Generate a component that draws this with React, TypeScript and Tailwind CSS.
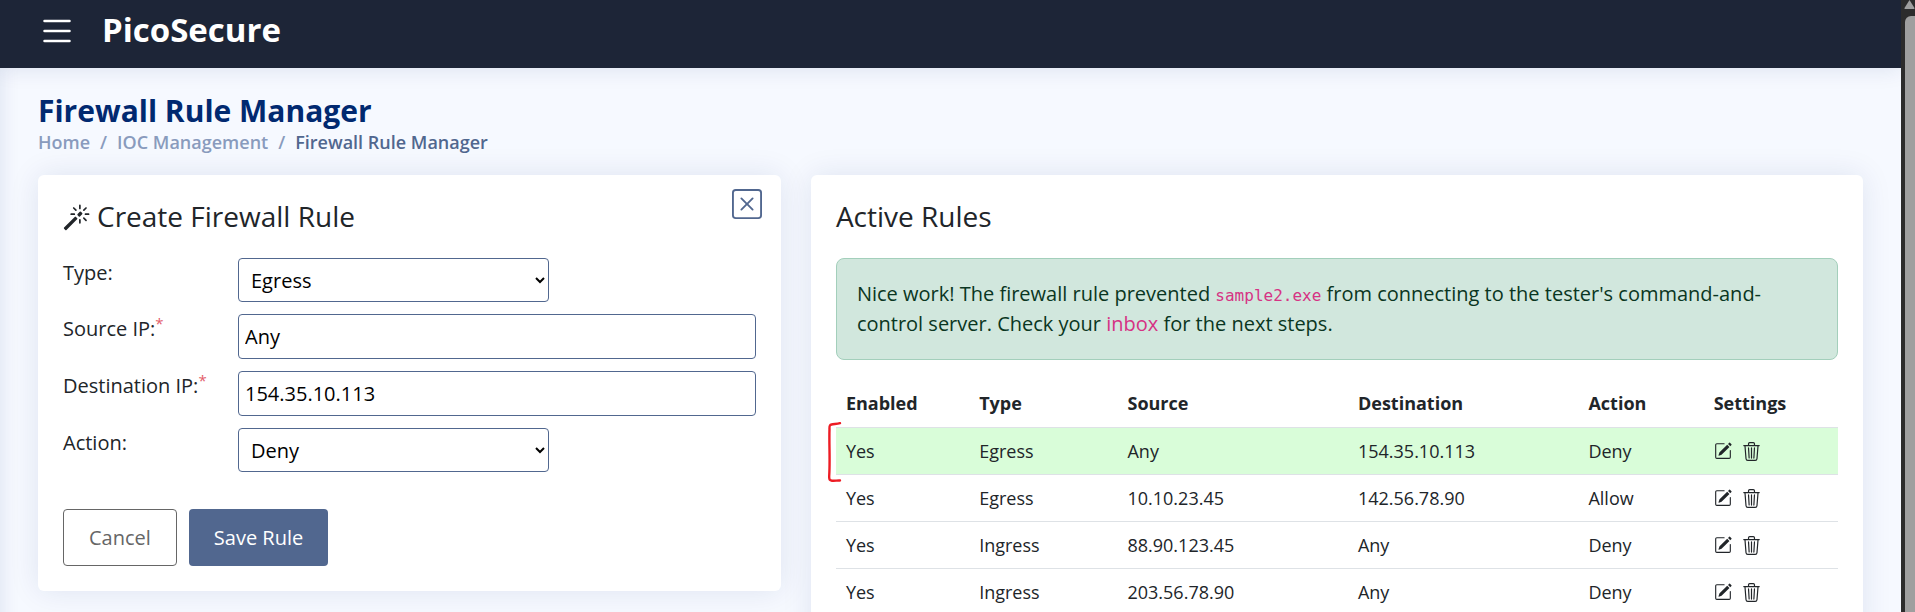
import { BsList, BsMagic, BsPencilSquare, BsTrash3, BsXSquare } from "react-icons/bs";

interface Rule {
  enabled: string;
  type: string;
  source: string;
  destination: string;
  action: string;
  highlighted?: boolean;
}

const rules: Rule[] = [
  { enabled: "Yes", type: "Egress", source: "Any", destination: "154.35.10.113", action: "Deny", highlighted: true },
  { enabled: "Yes", type: "Egress", source: "10.10.23.45", destination: "142.56.78.90", action: "Allow" },
  { enabled: "Yes", type: "Ingress", source: "88.90.123.45", destination: "Any", action: "Deny" },
  { enabled: "Yes", type: "Ingress", source: "203.56.78.90", destination: "Any", action: "Deny" },
];

const cardClass = "relative rounded-md bg-white p-[25px] shadow-[0_0_30px_rgba(1,41,112,0.1)]";
const cardTitleClass = "flex h-[58px] items-start text-[28px] leading-8 text-[#212529]";
const rowClass = "grid grid-cols-[175px_1fr]";
const labelClass = "text-xl leading-[30px] text-[#212529]";
const selectClass =
  "h-11 w-3/5 rounded border border-[#51678f] bg-white pl-2 text-xl text-black";
const inputClass =
  "h-[45px] w-full rounded border border-[#51678f] bg-white px-1.5 text-xl text-black";

function Header() {
  return (
    <header className="relative flex h-[68px] shrink-0 items-start gap-[25px] bg-[#1d2537] pl-[37px] pt-[11px] text-white shadow-[0_2px_20px_rgba(1,41,112,0.1)]">
      <button type="button" aria-label="Toggle navigation">
        <BsList size={40} />
      </button>
      <a href="#home" className="text-[33px] leading-[38px] font-bold">
        PicoSecure
      </a>
    </header>
  );
}

function Breadcrumb() {
  return (
    <nav aria-label="Breadcrumb">
      <ol className="flex gap-2.5 text-lg leading-6 font-semibold text-[#899bbd]">
        <li>
          <a href="#home">Home</a>
        </li>
        <li aria-hidden="true">/</li>
        <li>
          <a href="#ioc">IOC Management</a>
        </li>
        <li aria-hidden="true">/</li>
        <li className="text-[#51678f]" aria-current="page">
          Firewall Rule Manager
        </li>
      </ol>
    </nav>
  );
}

function RuleForm() {
  return (
    <section className={`${cardClass} col-span-5`}>
      <button type="button" aria-label="Close" className="absolute top-3.5 right-[19px] text-[#51678f]">
        <BsXSquare size={30} />
      </button>
      <h2 className={cardTitleClass}>
        <BsMagic size={27} className="mt-1 mr-[7px]" />
        Create Firewall Rule
      </h2>
      <form onSubmit={(event) => event.preventDefault()}>
        <div className="flex flex-col gap-3">
          <div className={rowClass}>
            <label htmlFor="type" className={labelClass}>
              Type:
            </label>
            <select id="type" className={selectClass} defaultValue="Egress">
              <option>Egress</option>
              <option>Ingress</option>
            </select>
          </div>
          <div className={rowClass}>
            <label htmlFor="source" className={labelClass}>
              Source IP:<sup className="text-[#e35d6a]">*</sup>
            </label>
            <input id="source" className={inputClass} defaultValue="Any" />
          </div>
          <div className={rowClass}>
            <label htmlFor="destination" className={labelClass}>
              Destination IP:<sup className="text-[#e35d6a]">*</sup>
            </label>
            <input id="destination" className={inputClass} defaultValue="154.35.10.113" />
          </div>
          <div className={rowClass}>
            <label htmlFor="action" className={labelClass}>
              Action:
            </label>
            <select id="action" className={selectClass} defaultValue="Deny">
              <option>Deny</option>
              <option>Allow</option>
            </select>
          </div>
        </div>
        <div className="mt-[37px] flex gap-3 text-xl">
          <button type="button" className="h-[57px] rounded border border-[#666] px-[25px] text-[#666]">
            Cancel
          </button>
          <button type="submit" className="h-[57px] rounded bg-[#51678f] px-[25px] text-white">
            Save Rule
          </button>
        </div>
      </form>
    </section>
  );
}

function RuleTable() {
  return (
    <table className="mt-5 w-full table-fixed text-left text-lg leading-[26px] text-[#212529]">
      <colgroup>
        <col className="w-[13.3%]" />
        <col className="w-[14.8%]" />
        <col className="w-[23%]" />
        <col className="w-[23%]" />
        <col className="w-[12.5%]" />
        <col />
      </colgroup>
      <thead>
        <tr className="border-b border-[#dee2e6] [&>th]:px-2.5 [&>th]:pt-2.5 [&>th]:pb-[11px]">
          <th>Enabled</th>
          <th>Type</th>
          <th>Source</th>
          <th>Destination</th>
          <th>Action</th>
          <th>Settings</th>
        </tr>
      </thead>
      <tbody>
        {rules.map((rule) => (
          <tr
            key={rule.source}
            className={`border-b border-[#dee2e6] [&>td]:p-2.5 ${rule.highlighted ? "bg-[#d9fdd9]" : ""}`}
          >
            <td className="relative">
              {rule.highlighted && (
                <svg
                  viewBox="0 0 14 60"
                  className="absolute -top-1.5 -left-2 h-[60px] w-3.5"
                  fill="none"
                  stroke="#ed1c24"
                  strokeWidth="2.4"
                  strokeLinecap="round"
                  strokeLinejoin="round"
                  aria-hidden="true"
                >
                  <path d="M12 1.2C9 2 6 2 3.500 2.500C1.500 3 1.300 4 1.500 7C1 22 2.200 38 1.200 54C1 58 2 58.300 4 58.700C7 59 9 58.300 12 58.500" />
                </svg>
              )}
              {rule.enabled}
            </td>
            <td>{rule.type}</td>
            <td>{rule.source}</td>
            <td>{rule.destination}</td>
            <td>{rule.action}</td>
            <td>
              <div className="flex gap-2.5">
                <button type="button" aria-label="Edit rule">
                  <BsPencilSquare size={18} />
                </button>
                <button type="button" aria-label="Delete rule">
                  <BsTrash3 size={19} />
                </button>
              </div>
            </td>
          </tr>
        ))}
      </tbody>
    </table>
  );
}

function ActiveRules() {
  return (
    <section className={`${cardClass} col-span-7`}>
      <h2 className={cardTitleClass}>Active Rules</h2>
      <p
        role="status"
        className="rounded-lg border border-[#a3cfbb] bg-[#d1e7dd] p-5 text-xl leading-[30px] text-[#0a3622]"
      >
        Nice work! The firewall rule prevented{" "}
        <code className="font-['DejaVu_Sans_Mono',monospace] text-base leading-6 text-[#d63384]">sample2.exe</code> from
        connecting to the tester's command-and-control server. Check your{" "}
        <a href="#inbox" className="text-[#d63384]">
          inbox
        </a>{" "}
        for the next steps.
      </p>
      <RuleTable />
    </section>
  );
}

function ScrollTrack() {
  return (
    <div className="flex w-3.5 shrink-0 flex-col items-end bg-[#2c2c2c]" aria-hidden="true">
      <svg viewBox="0 0 11 9" className="h-[9px] w-[11px]" fill="#9f9f9f">
        <path d="M5.500 0L10.500 8Q10.800 9 10 9H1Q.2 9 .5 8z" />
      </svg>
      <div className="mt-[7px] w-2.5 grow rounded-tl-md bg-[#9f9f9f]" />
    </div>
  );
}

export default function App() {
  return (
    <div className="flex h-screen overflow-hidden font-['Open_Sans',sans-serif]">
      <div className="flex min-w-0 grow flex-col overflow-hidden">
        <Header />
        <main className="grow bg-[#f6f9ff] px-[38px] pt-6 shadow-[inset_20px_0_20px_-20px_rgba(1,41,112,0.12)]">
          <h1 className="text-[30px] leading-[38px] font-bold text-[#012970]">Firewall Rule Manager</h1>
          <Breadcrumb />
          <div className="mt-[21px] grid grid-cols-12 items-start gap-[30px]">
            <RuleForm />
            <ActiveRules />
          </div>
        </main>
      </div>
      <ScrollTrack />
    </div>
  );
}
